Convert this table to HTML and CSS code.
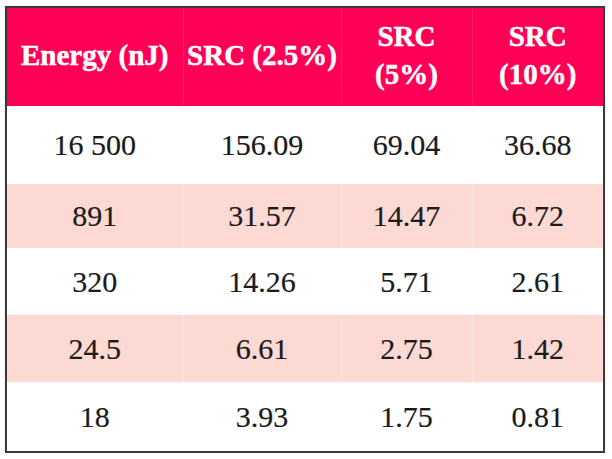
FILE: index.html
```html
<!DOCTYPE html>
<html lang="en">
<head>
<meta charset="utf-8">
<title>SRC table</title>
<link rel="stylesheet" href="styles.css">
</head>
<body>
<div class="frame">
<table class="data">
  <colgroup>
    <col class="c1"><col class="c2"><col class="c3"><col class="c4">
  </colgroup>
  <thead>
    <tr>
      <th>Energy (nJ)</th>
      <th>SRC (2.5%)</th>
      <th>SRC (5%)</th>
      <th>SRC (10%)</th>
    </tr>
  </thead>
  <tbody>
    <tr class="r1"><td>16 500</td><td>156.09</td><td>69.04</td><td>36.68</td></tr>
    <tr class="r2 alt"><td>891</td><td>31.57</td><td>14.47</td><td>6.72</td></tr>
    <tr class="r3"><td>320</td><td>14.26</td><td>5.71</td><td>2.61</td></tr>
    <tr class="r4 alt"><td>24.5</td><td>6.61</td><td>2.75</td><td>1.42</td></tr>
    <tr class="r5"><td>18</td><td>3.93</td><td>1.75</td><td>0.81</td></tr>
  </tbody>
</table>
</div>
</body>
</html>
```

FILE: styles.css
```css
html, body {
  margin: 0;
  padding: 0;
  background: #ffffff;
}

body {
  padding: 6px 0 0 5px;
  font-family: "Liberation Serif", "Times New Roman", serif;
}

.frame {
  width: 596px;
  border: 2px solid #3a3a3a;
  box-shadow: 0 0 1px rgba(0,0,0,0.3);
}

.data {
  width: 596px;
  border-collapse: collapse;
  table-layout: fixed;
  font-family: "Liberation Serif", "Times New Roman", serif;
}

.c1 { width: 176px; }
.c2 { width: 158px; }
.c3 { width: 131px; }
.c4 { width: 131px; }

.data th {
  height: 93px;
  padding: 0 2px 5px;
  background: #ff0056;
  color: #ffffff;
  font-weight: bold;
  font-size: 29px;
  line-height: 38px;
  text-align: center;
  vertical-align: middle;
  border-left: 1px solid rgba(255,255,255,0.12);
  -webkit-text-stroke: 0.5px #ffffff;
}

.data th:first-child,
.data td:first-child {
  border-left: none;
}

.data td {
  padding: 0;
  font-size: 30px;
  color: #1b1b1b;
  text-align: center;
  vertical-align: middle;
  border-left: 1px solid rgba(255,255,255,0.35);
  -webkit-text-stroke: 0.2px #1b1b1b;
}

.alt td {
  background: #fdd9d3;
}

.r1 td { height: 78px; }
.r2 td { height: 64px; }
.r3 td { height: 67px; }
.r4 td { height: 67px; }
.r5 td { height: 69px; }
```
